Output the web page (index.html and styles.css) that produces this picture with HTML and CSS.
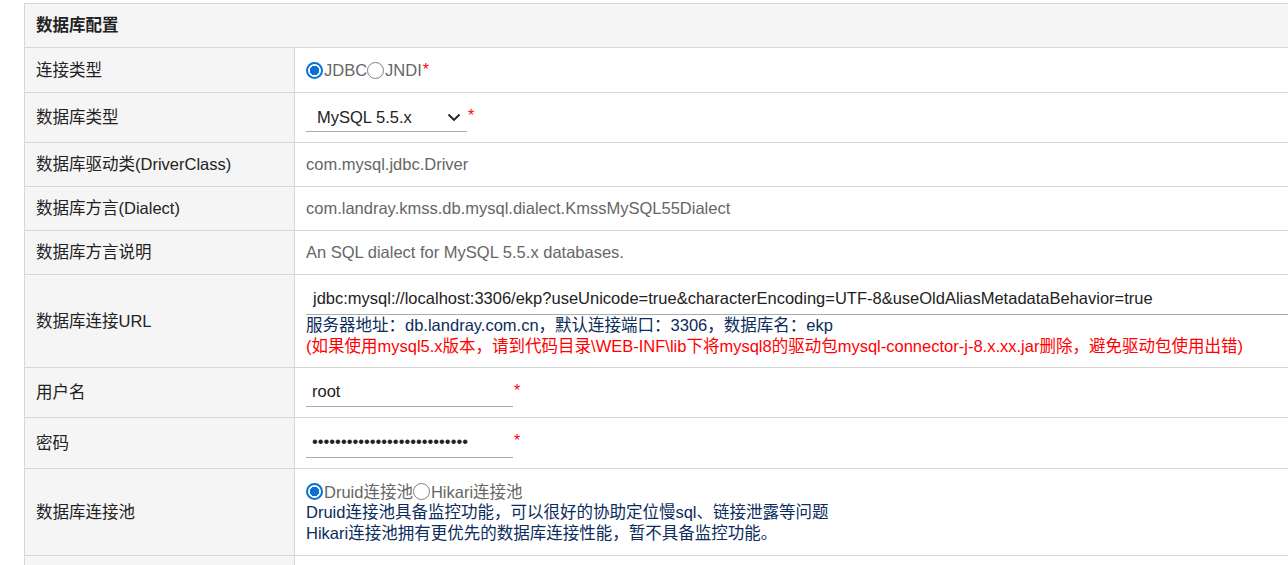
FILE: index.html
```html
<!DOCTYPE html>
<html lang="zh-CN">
<head>
<meta charset="utf-8">
<title>数据库配置</title>
<link rel="stylesheet" href="styles.css">
</head>
<body>
<div class="form">
  <div class="head">数据库配置</div>

  <div class="row r45">
    <div class="label">连接类型</div>
    <div class="value">
      <div class="radios">
        <label class="opt"><input type="radio" name="ctype" checked><span>JDBC</span></label>
        <label class="opt"><input type="radio" name="ctype"><span>JNDI</span></label>
        <span class="req">*</span>
      </div>
    </div>
  </div>

  <div class="row r50">
    <div class="label">数据库类型</div>
    <div class="value">
      <div class="field">
        <div class="select"><span>MySQL 5.5.x</span>
          <svg class="chev" width="14" height="9" viewBox="0 0 14 9"><path d="M1.5 1.5 L7 7 L12.5 1.5" fill="none" stroke="#222" stroke-width="1.8"/></svg>
        </div>
        <span class="req">*</span>
      </div>
    </div>
  </div>

  <div class="row r44">
    <div class="label">数据库驱动类(DriverClass)</div>
    <div class="value"><span class="plain">com.mysql.jdbc.Driver</span></div>
  </div>

  <div class="row r44">
    <div class="label">数据库方言(Dialect)</div>
    <div class="value"><span class="plain">com.landray.kmss.db.mysql.dialect.KmssMySQL55Dialect</span></div>
  </div>

  <div class="row r44">
    <div class="label">数据库方言说明</div>
    <div class="value"><span class="plain">An SQL dialect for MySQL 5.5.x databases.</span></div>
  </div>

  <div class="row r93">
    <div class="label">数据库连接URL</div>
    <div class="value col">
      <input class="text wide" type="text" value="jdbc:mysql://localhost:3306/ekp?useUnicode=true&amp;characterEncoding=UTF-8&amp;useOldAliasMetadataBehavior=true">
      <div class="info">服务器地址：db.landray.com.cn，默认连接端口：3306，数据库名：ekp</div>
      <div class="warn">(如果使用mysql5.x版本，请到代码目录\WEB-INF\lib下将mysql8的驱动包mysql-connector-j-8.x.xx.jar删除，避免驱动包使用出错)</div>
    </div>
  </div>

  <div class="row r50">
    <div class="label">用户名</div>
    <div class="value">
      <div class="field">
        <input class="text short" type="text" value="root">
        <span class="req">*</span>
      </div>
    </div>
  </div>

  <div class="row r51">
    <div class="label">密码</div>
    <div class="value">
      <div class="field">
        <input class="text short pw" type="password" value="abcdefghijklmnopqrstuvwxyz1">
        <span class="req">*</span>
      </div>
    </div>
  </div>

  <div class="row r87">
    <div class="label">数据库连接池</div>
    <div class="value col">
      <div class="radios">
        <label class="opt"><input type="radio" name="pool" checked><span>Druid连接池</span></label>
        <label class="opt"><input type="radio" name="pool"><span>Hikari连接池</span></label>
      </div>
      <div class="info">Druid连接池具备监控功能，可以很好的协助定位慢sql、链接泄露等问题</div>
      <div class="info">Hikari连接池拥有更优先的数据库连接性能，暂不具备监控功能。</div>
    </div>
  </div>

  <div class="row r44">
    <div class="label"></div>
    <div class="value"></div>
  </div>
</div>
</body>
</html>
```

FILE: styles.css
```css
html, body {
  margin: 0;
  padding: 0;
  background: #fff;
  overflow: hidden;
}
body {
  padding: 3px 0 0 24px;
  font-family: "Liberation Sans", Arial, "Noto Sans CJK SC", sans-serif;
  font-size: 16.5px;
  color: #222;
}
.form {
  width: 1320px;
  border-top: 1px solid #d6d6d6;
  border-left: 1px solid #d6d6d6;
}
.head {
  height: 43px;
  line-height: 43px;
  padding-left: 11px;
  background: #f5f5f5;
  font-weight: bold;
  color: #222;
  border-bottom: 1px solid #d6d6d6;
}
.row {
  display: flex;
  border-bottom: 1px solid #d6d6d6;
}
.r44 { height: 43px; }
.r45 { height: 44px; }
.r50 { height: 49px; }
.r51 { height: 50px; }
.r87 { height: 86px; }
.r93 { height: 92px; }
.label {
  width: 258px;
  flex: none;
  padding-left: 11px;
  background: #f5f5f5;
  border-right: 1px solid #d6d6d6;
  display: flex;
  align-items: center;
  line-height: 21px;
}
.value {
  flex: 1;
  padding-left: 11px;
  display: flex;
  align-items: center;
  min-width: 0;
}
.value.col {
  flex-direction: column;
  align-items: stretch;
  justify-content: center;
}
.plain { color: #666; }
.radios {
  display: flex;
  align-items: center;
  height: 21px;
  color: #666;
}
.opt {
  display: flex;
  align-items: center;
}
.opt input {
  appearance: none;
  -webkit-appearance: none;
  margin: 0 1px 0 0;
  width: 17px;
  height: 17px;
  border: 1px solid #808080;
  border-radius: 50%;
  background: #fff;
  box-sizing: border-box;
  flex: none;
}
.opt input:checked {
  border: 2px solid #0a72d4;
  background: radial-gradient(circle, #0a72d4 0 4.5px, #fff 5px);
}
.req {
  color: #f00;
  font-size: 16px;
  align-self: flex-start;
  margin-left: 1px;
}
.radios .req { margin-top: 1px; }
.field {
  display: flex;
  align-items: flex-end;
}
.field .req {
  align-self: center;
  margin-top: -4px;
  margin-left: 1px;
}
.select {
  width: 161px;
  height: 27px;
  margin-top: 2px;
  box-sizing: border-box;
  border-bottom: 1px solid #ababab;
  display: flex;
  align-items: center;
  justify-content: space-between;
  padding: 0 6px 1px 11px;
  color: #222;
}
.chev { display: block; }
.text {
  font-family: "Liberation Sans", Arial, "Noto Sans CJK SC", sans-serif;
  font-size: 16.5px;
  color: #222;
  border: 0;
  border-bottom: 1px solid #ababab;
  outline: none;
  background: transparent;
  box-sizing: border-box;
  margin: 0;
  padding: 0 6px 2px 6px;
}
.wide {
  width: 100%;
  height: 30px;
  padding-left: 7px;
}
.short {
  width: 207px;
  height: 29px;
}
.pw { letter-spacing: 0; }
.info {
  color: #0b2c5c;
  line-height: 21px;
  white-space: nowrap;
}
.warn {
  color: #f00;
  line-height: 21px;
  white-space: nowrap;
}
```
